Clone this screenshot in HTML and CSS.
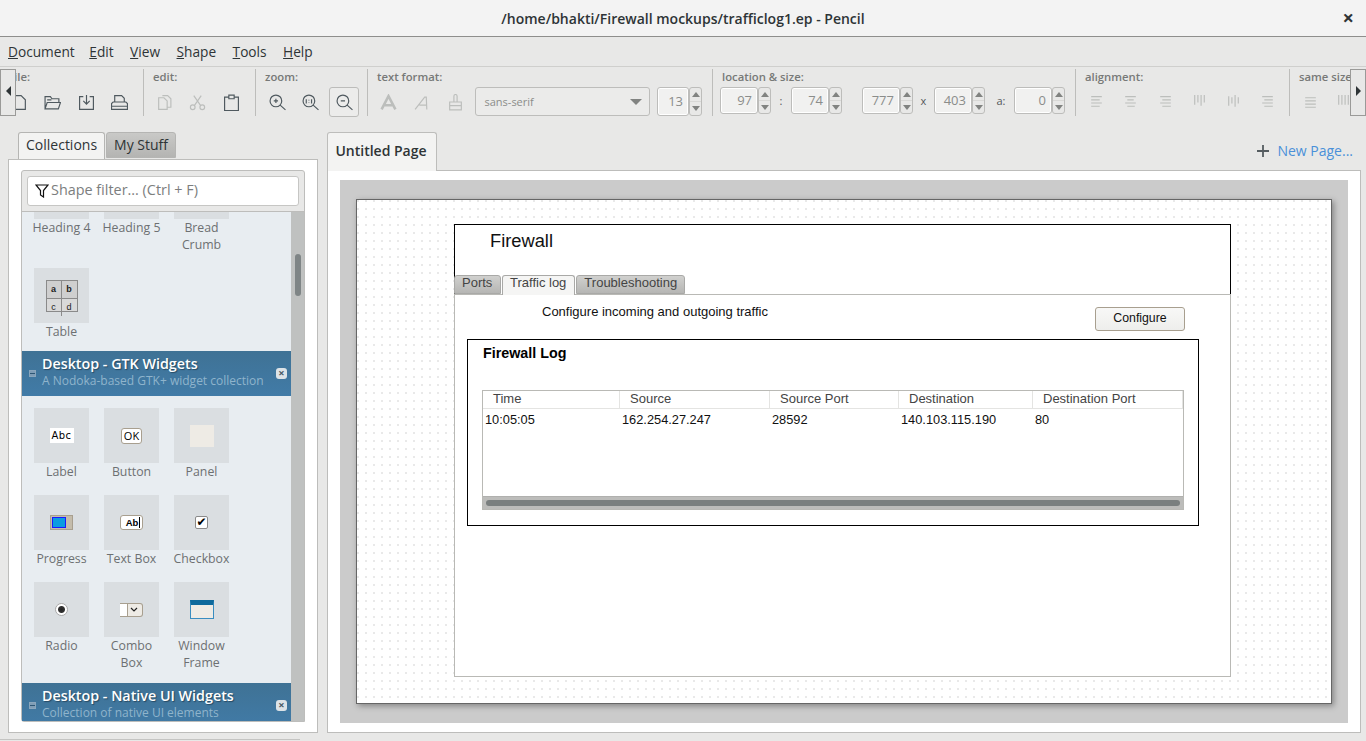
FILE: index.html
```html
<!DOCTYPE html>
<html lang="en">
<head>
    <meta charset="UTF-8">
    <title>trafficlog1.ep - Pencil</title>
    <link rel="stylesheet" href="styles.css">
</head>
<body>
    <svg class="defs" width="0" height="0">
        <symbol id="i-new" viewBox="0 0 16 16"><path d="M2.5 1.5h7l4 4v9h-11z"/></symbol>
        <symbol id="i-open" viewBox="0 0 16 16"><path d="M1 14V2.5h5l1.5 2h6.5v3.5M1 14l2-6h12.5l-2 6zM3 5.5h4"/></symbol>
        <symbol id="i-save" viewBox="0 0 16 16"><path d="M5 2.5H1.500v12h13v-12H11M8 1v8.500M5 6.500L8 9.500l3-3"/></symbol>
        <symbol id="i-print" viewBox="0 0 16 16"><path d="M3.5 7.5V1.5h6.5l2.5 2.5v3.5M.5 14.5V9l1.5-1.5h12L15.5 9v5.5zM.5 11.5h15"/></symbol>
        <symbol id="i-copy" viewBox="0 0 16 16"><path d="M6 1.5h5l3 3v8h-3M2.5 3.5h5l3 3v8h-8z"/></symbol>
        <symbol id="i-cut" viewBox="0 0 16 16"><circle cx="3.5" cy="12.5" r="2.2"/><circle cx="12.5" cy="12.5" r="2.2"/><path d="M5 11L11.5 1.5M11 11L4.5 1.5"/></symbol>
        <symbol id="i-paste" viewBox="0 0 16 16"><path d="M5 3H1.5v12.5h13V3H11M5.5 4.5V1h5v3.5z"/></symbol>
        <symbol id="i-zin" viewBox="0 0 16 16"><circle cx="6.5" cy="6.5" r="5.5"/><path d="M10.5 10.5l5 4.5M4.5 6.5h4M6.5 4.5v4"/></symbol>
        <symbol id="i-zfit" viewBox="0 0 16 16"><circle cx="6.5" cy="6.5" r="5.5"/><path d="M10.5 10.5l5 4.5M4 5v4M6.5 5.5v.5M6.5 8v.5M9 5v4"/></symbol>
        <symbol id="i-zout" viewBox="0 0 16 16"><circle cx="6.5" cy="6.5" r="5.5"/><path d="M10.5 10.5l5 4.5M4.5 6.5h4"/></symbol>
        <symbol id="i-bold" viewBox="0 0 16 16"><path class="fat" d="M1.5 14.5L8 2 14.5 14.5M4.5 10.5h7"/></symbol>
        <symbol id="i-italic" viewBox="0 0 16 16"><path d="M2 14.5L11 3h1.5l.5 11.5M6 10.5h7"/></symbol>
        <symbol id="i-brush" viewBox="0 0 16 16"><path d="M6.5 7V2a1.5 1.5 0 0 1 3 0v5M2.5 7.5h11V15h-11zM2.5 11h11"/></symbol>
        <symbol id="i-left" viewBox="0 0 16 16"><path d="M3 2.5h10M3 5.5h8M3 8.5h10M3 11.5h8"/></symbol>
        <symbol id="i-center" viewBox="0 0 16 16"><path d="M3 2.5h10M5 5.5h6M3 8.5h10M5 11.5h7"/></symbol>
        <symbol id="i-right" viewBox="0 0 16 16"><path d="M3 2.5h10M5 5.5h8M3 8.5h10M5 11.5h8"/></symbol>
        <symbol id="i-vert" viewBox="0 0 16 16"><path d="M3.5 1v9M6.5 1v7M9.5 1v10M12.5 1v7"/></symbol>
        <symbol id="i-vmid" viewBox="0 0 16 16"><path d="M3.5 2v9M6.5 3v6M9.5 1v11M12.5 3v6"/></symbol>
        <symbol id="i-even" viewBox="0 0 16 16"><path d="M3 3.5h10M3 6.5h10M3 9.5h10M3 12.5h10"/></symbol>
        <symbol id="i-bars" viewBox="0 0 16 16"><path d="M3.5 1v9M6.5 1v9M9.5 1v9M12.5 1v9"/></symbol>
    </svg>

    <header class="titlebar">
        <span class="window-title">/home/bhakti/Firewall mockups/trafficlog1.ep - Pencil</span>
        <span class="window-close">&times;</span>
    </header>

    <nav class="menubar">
        <a><u>D</u>ocument</a>
        <a><u>E</u>dit</a>
        <a><u>V</u>iew</a>
        <a><u>S</u>hape</a>
        <a><u>T</u>ools</a>
        <a><u>H</u>elp</a>
    </nav>

    <div class="toolbar">
        <div class="toolbar-strip">
            <section class="tool-group group-file">
                <h4>file:</h4>
                <div class="tool-row">
                    <span class="tool"><svg><use href="#i-new"/></svg></span>
                    <span class="tool"><svg><use href="#i-open"/></svg></span>
                    <span class="tool"><svg><use href="#i-save"/></svg></span>
                    <span class="tool"><svg><use href="#i-print"/></svg></span>
                </div>
            </section>
            <section class="tool-group group-edit">
                <h4>edit:</h4>
                <div class="tool-row">
                    <span class="tool off"><svg><use href="#i-copy"/></svg></span>
                    <span class="tool off"><svg><use href="#i-cut"/></svg></span>
                    <span class="tool"><svg><use href="#i-paste"/></svg></span>
                </div>
            </section>
            <section class="tool-group group-zoom">
                <h4>zoom:</h4>
                <div class="tool-row">
                    <span class="tool"><svg><use href="#i-zin"/></svg></span>
                    <span class="tool"><svg><use href="#i-zfit"/></svg></span>
                    <span class="tool active"><svg><use href="#i-zout"/></svg></span>
                </div>
            </section>
            <section class="tool-group group-text">
                <h4>text format:</h4>
                <div class="tool-row">
                    <span class="tool off"><svg><use href="#i-bold"/></svg></span>
                    <span class="tool off"><svg><use href="#i-italic"/></svg></span>
                    <span class="tool off"><svg><use href="#i-brush"/></svg></span>
                    <span class="combo">sans-serif<i class="combo-arrow"></i></span>
                    <span class="spin spin-font"><b>13</b><i class="spin-btns"><i class="up"></i><i class="down"></i></i></span>
                </div>
            </section>
            <section class="tool-group group-geom">
                <h4>location &amp; size:</h4>
                <div class="tool-row geom-row">
                    <span class="spin"><b>97</b><i class="spin-btns"><i class="up"></i><i class="down"></i></i></span>
                    <span class="geom-sep">:</span>
                    <span class="spin"><b>74</b><i class="spin-btns"><i class="up"></i><i class="down"></i></i></span>
                    <span class="geom-gap"></span>
                    <span class="spin"><b>777</b><i class="spin-btns"><i class="up"></i><i class="down"></i></i></span>
                    <span class="geom-sep geom-x">x</span>
                    <span class="spin"><b>403</b><i class="spin-btns"><i class="up"></i><i class="down"></i></i></span>
                    <span class="geom-sep geom-a">a:</span>
                    <span class="spin"><b>0</b><i class="spin-btns"><i class="up"></i><i class="down"></i></i></span>
                </div>
            </section>
            <section class="tool-group group-align">
                <h4>alignment:</h4>
                <div class="tool-row">
                    <span class="tool off"><svg><use href="#i-left"/></svg></span>
                    <span class="tool off"><svg><use href="#i-center"/></svg></span>
                    <span class="tool off"><svg><use href="#i-right"/></svg></span>
                    <span class="tool off"><svg><use href="#i-vert"/></svg></span>
                    <span class="tool off"><svg><use href="#i-vmid"/></svg></span>
                    <span class="tool off"><svg><use href="#i-right"/></svg></span>
                </div>
            </section>
            <section class="tool-group group-same">
                <h4>same size:</h4>
                <div class="tool-row">
                    <span class="tool off"><svg><use href="#i-even"/></svg></span>
                    <span class="tool off"><svg><use href="#i-bars"/></svg></span>
                </div>
            </section>
        </div>
        <button class="scroll-btn scroll-left"><i></i></button>
        <button class="scroll-btn scroll-right"><i></i></button>
    </div>

    <main class="workspace">
        <aside class="sidebar">
            <div class="side-tabs">
                <span class="side-tab current">Collections</span>
                <span class="side-tab">My Stuff</span>
            </div>
            <div class="side-panel">
                <div class="collections">
                    <div class="filter-bar">
                        <div class="filter-input">
                            <svg class="filter-icon" viewBox="0 0 14 14"><path d="M1 1h12L8.5 6.5V13L5.5 11V6.5z"/></svg>
                            Shape filter... (Ctrl + F)
                        </div>
                    </div>
                    <div class="list-wrap">
                        <div class="shape-list">
                            <div class="shape-grid scrolled">
                                <div class="shape-item"><div class="tile"></div><span>Heading 4</span></div>
                                <div class="shape-item"><div class="tile"></div><span>Heading 5</span></div>
                                <div class="shape-item"><div class="tile"></div><span>Bread<br>Crumb</span></div>
                                <div class="shape-item">
                                    <div class="tile">
                                        <div class="ico-table"><b>a</b><b>b</b><span>c</span><span>d</span></div>
                                    </div>
                                    <span>Table</span>
                                </div>
                            </div>
                            <div class="collection-head">
                                <i class="head-minus"></i>
                                <div>
                                    <h3>Desktop - GTK Widgets</h3>
                                    <p>A Nodoka-based GTK+ widget collection</p>
                                </div>
                                <i class="head-close"></i>
                            </div>
                            <div class="shape-grid">
                                <div class="shape-item"><div class="tile"><span class="ico-label">Abc</span></div><span>Label</span></div>
                                <div class="shape-item"><div class="tile"><span class="ico-button">OK</span></div><span>Button</span></div>
                                <div class="shape-item"><div class="tile"><span class="ico-panel"></span></div><span>Panel</span></div>
                                <div class="shape-item"><div class="tile"><span class="ico-progress"><i></i></span></div><span>Progress</span></div>
                                <div class="shape-item"><div class="tile"><span class="ico-textbox">Ab<i></i></span></div><span>Text Box</span></div>
                                <div class="shape-item"><div class="tile"><span class="ico-check">&#10004;</span></div><span>Checkbox</span></div>
                                <div class="shape-item"><div class="tile"><span class="ico-radio"></span></div><span>Radio</span></div>
                                <div class="shape-item">
                                    <div class="tile">
                                        <span class="ico-combo"><svg viewBox="0 0 8 6"><path d="M1 1l3 3 3-3"/></svg></span>
                                    </div>
                                    <span>Combo<br>Box</span>
                                </div>
                                <div class="shape-item"><div class="tile"><span class="ico-frame"></span></div><span>Window<br>Frame</span></div>
                            </div>
                            <div class="collection-head">
                                <i class="head-minus"></i>
                                <div>
                                    <h3>Desktop - Native UI Widgets</h3>
                                    <p>Collection of native UI elements</p>
                                </div>
                                <i class="head-close"></i>
                            </div>
                        </div>
                        <div class="list-scroll"><i></i></div>
                    </div>
                </div>
            </div>
        </aside>

        <div class="pages">
            <div class="page-tabs">
                <span class="page-tab">Untitled Page</span>
                <span class="new-page">
                    <svg viewBox="0 0 12 12"><path d="M6 0v12M0 6h12"/></svg>
                    New Page...
                </span>
            </div>
            <div class="page-panel">
                <div class="canvas">
                    <div class="drawing">
                        <div class="mock mock-head"></div>
                        <div class="mock mock-body"></div>
                        <div class="mock mock-title">Firewall</div>
                        <div class="mock mock-tabs">
                            <span class="mock-tab">Ports</span>
                            <span class="mock-tab on">Traffic log</span>
                            <span class="mock-tab">Troubleshooting</span>
                        </div>
                        <div class="mock mock-note">Configure incoming and outgoing traffic</div>
                        <div class="mock mock-button">Configure</div>
                        <div class="mock mock-log">
                            <div class="log-title">Firewall Log</div>
                            <div class="log-table">
                                <div class="log-row log-header">
                                    <span>Time</span><span>Source</span><span>Source Port</span><span>Destination</span><span>Destination Port</span>
                                </div>
                                <div class="log-row log-data">
                                    <span>10:05:05</span><span>162.254.27.247</span><span>28592</span><span>140.103.115.190</span><span>80</span>
                                </div>
                                <div class="log-scroll"><i></i></div>
                            </div>
                        </div>
                    </div>
                </div>
            </div>
        </div>
    </main>

    <div class="status-line"></div>
</body>
</html>
```
FILE: styles.css
```css
/* Reset */
* {
    margin: 0;
    padding: 0;
    box-sizing: border-box;
}

body {
    width: 1366px;
    height: 741px;
    overflow: hidden;
    font-family: 'Open Sans', sans-serif;
    background-color: #e8e8e7;
    color: #2e3436;
    display: flex;
    flex-direction: column;
    position: relative;
}

i {
    font-style: normal;
}

.defs {
    position: absolute;
}

/* Title bar */
.titlebar {
    height: 37px;
    flex: none;
    background-color: #f3f3f3;
    border-bottom: 1px solid #8e8e8c;
    display: flex;
    align-items: center;
    justify-content: center;
    position: relative;
}

.window-title {
    font-size: 14px;
    font-weight: 600;
    color: #2e3436;
}

.window-close {
    position: absolute;
    right: 12px;
    top: 6px;
    font-size: 20px;
    font-weight: 700;
    line-height: 24px;
}

/* Menu */
.menubar {
    height: 30px;
    flex: none;
    display: flex;
    gap: 16.5px;
    align-items: center;
    padding-left: 8px;
    border-bottom: 1px solid #cfcfcd;
    font-size: 13.7px;
}

.menubar a:first-child {
    margin-right: -2px;
}

/* Toolbar */
.toolbar {
    height: 65px;
    flex: none;
    position: relative;
    overflow: hidden;
}

.toolbar-strip {
    display: flex;
    margin-left: -9px;
    padding-top: 2px;
}

.tool-group {
    height: 47px;
    flex: none;
    border-right: 1px solid #bdbdbb;
    padding-left: 9px;
}

.group-file { width: 153px; padding-left: 19px; }
.group-edit { width: 112px; }
.group-zoom { width: 112px; }
.group-text { width: 345px; }
.group-geom { width: 363px; }
.group-align { width: 214px; }
.group-same { width: 120px; border-right: 0; }

.tool-group h4 {
    font-size: 11.3px;
    font-weight: 600;
    line-height: 16px;
    color: #777977;
    height: 18px;
}

.tool-row {
    display: flex;
    align-items: flex-start;
    gap: 3.6px;
    margin-left: -3px;
}

.group-file .tool-row { margin-left: -6px; }
.group-edit .tool-row { margin-left: -4px; }

.tool {
    width: 30px;
    height: 30px;
    display: flex;
    align-items: center;
    justify-content: center;
    border: 1px solid transparent;
    border-radius: 3px;
}

.tool svg {
    width: 17px;
    height: 17px;
    fill: none;
    stroke: #4f595f;
    stroke-width: 1.1;
}

.tool.off svg {
    stroke: #bcbebc;
}

.fat {
    stroke-width: 2.4;
}

.tool.active {
    border-color: #bcbcba;
    background-color: #ececeb;
}

.group-text .tool-row {
    margin-left: -4px;
    gap: 3.5px;
}

.group-align .tool-row {
    gap: 4.3px;
    margin-left: -3.5px;
}

.group-same .tool-row {
    margin-left: -4px;
}

.combo {
    width: 175px;
    height: 29px;
    margin-left: 1px;
    border: 1px solid #bdbdbb;
    border-radius: 3px;
    background-color: #ebebea;
    display: flex;
    align-items: center;
    justify-content: space-between;
    padding: 0 7px 0 9px;
    font-size: 11px;
    color: #8b8d8b;
}

.combo-arrow {
    border-left: 6px solid transparent;
    border-right: 6px solid transparent;
    border-top: 6px solid #818381;
}

.spin {
    display: flex;
    height: 27px;
}

.spin b {
    width: 38px;
    border: 1px solid #bdbdbb;
    border-radius: 3px;
    background-color: #f1f1f0;
    box-shadow: inset 0 0 0 1px #fff;
    font-size: 13px;
    font-weight: 400;
    color: #8b8d8b;
    text-align: right;
    padding-right: 5px;
    line-height: 25px;
}

.spin-font {
    margin-left: 4px;
    height: 29px;
}

.spin-font b {
    width: 32px;
    line-height: 27px;
}

.spin-btns {
    width: 13px;
    border: 1px solid #bdbdbb;
    border-radius: 3px;
    display: flex;
    flex-direction: column;
}

.spin-btns i {
    flex: 1;
    display: flex;
    align-items: center;
    justify-content: center;
}

.spin-btns i::before {
    content: "";
    border-left: 4px solid transparent;
    border-right: 4px solid transparent;
}

.spin-btns .up {
    border-bottom: 1px solid #d8d8d6;
}

.spin-btns .up::before {
    border-bottom: 5px solid #818381;
}

.spin-btns .down::before {
    border-top: 5px solid #818381;
}

.geom-row {
    gap: 0;
    margin-left: -2px;
}

.geom-sep {
    width: 20px;
    text-align: center;
    font-size: 11px;
    line-height: 27px;
    color: #55585a;
}

.geom-gap {
    width: 20px;
}

.geom-x {
    width: 21px;
}

.geom-a {
    width: 29px;
    padding-left: 3px;
}

.scroll-btn {
    position: absolute;
    top: 2px;
    width: 16px;
    height: 47px;
    background-color: #e8e8e7;
    border: 1px solid #9a9a98;
    display: flex;
    align-items: center;
    justify-content: center;
    padding-bottom: 4px;
}

.scroll-left {
    left: 0;
}

.scroll-right {
    right: 0;
}

.scroll-left i {
    border-top: 5px solid transparent;
    border-bottom: 5px solid transparent;
    border-right: 5px solid #2e3436;
}

.scroll-right i {
    border-top: 5px solid transparent;
    border-bottom: 5px solid transparent;
    border-left: 5px solid #2e3436;
}

/* Main area */
.workspace {
    flex: 1;
    display: flex;
    padding: 0 5px 8px 8px;
    min-height: 0;
}

/* Left panel */
.sidebar {
    width: 310px;
    margin-right: 9px;
    display: flex;
    flex-direction: column;
}

.side-tabs {
    display: flex;
    gap: 1px;
    padding-left: 10px;
    height: 27px;
    flex: none;
    position: relative;
    z-index: 1;
}

.side-tab {
    height: 26px;
    padding: 0 7px;
    border: 1px solid #b5b5b3;
    border-radius: 3px 3px 0 0;
    background: linear-gradient(#c9c9c7, #b4b4b2);
    font-size: 14px;
    line-height: 23px;
}

.side-tab.current {
    height: 27px;
    background: #f3f3f2;
    border-bottom: 0;
}

.side-panel {
    flex: 1;
    background-color: #fff;
    border: 1px solid #bdbdbb;
    padding: 10px 12px;
    min-height: 0;
}

.collections {
    height: 100%;
    border: 1px solid #bdbdbb;
    border-radius: 3px 3px 0 3px;
    background-color: #e8e8e7;
    display: flex;
    flex-direction: column;
}

.filter-bar {
    height: 41px;
    flex: none;
    padding: 5px 5px 0;
    border-bottom: 1px solid #bdbdbb;
}

.filter-input {
    height: 30px;
    background-color: #fff;
    border: 1px solid #c6c6c4;
    border-radius: 3px;
    font-size: 14.4px;
    line-height: 26px;
    padding-bottom: 2px;
    color: #7c7e7e;
    display: flex;
    align-items: center;
    padding-left: 7px;
    gap: 2px;
}

.filter-icon {
    width: 14px;
    height: 14px;
    margin-top: 2px;
    fill: none;
    stroke: #111;
    stroke-width: 1.2;
    flex: none;
}

.list-wrap {
    flex: 1;
    display: flex;
    min-height: 0;
}

.shape-list {
    width: 269px;
    flex: none;
    background-color: #e8edf1;
    overflow: hidden;
}

.list-scroll {
    flex: 1;
    background-color: #bfc1c0;
    padding-left: 4px;
}

.list-scroll i {
    display: block;
    width: 6px;
    height: 42px;
    margin-top: 42px;
    border-radius: 3px;
    background-color: #7f8586;
}

.shape-grid {
    display: grid;
    grid-template-columns: repeat(3, 55px);
    column-gap: 15px;
    row-gap: 15px;
    padding: 12px 12px 12px;
}

.shape-grid.scrolled {
    margin-top: -60px;
    padding-bottom: 11px;
}

.shape-item {
    font-size: 12.3px;
    line-height: 17px;
    color: #6d7072;
    text-align: center;
}

.shape-item > span {
    display: block;
    margin: 0 -6px;
    white-space: nowrap;
}

.tile {
    width: 55px;
    height: 55px;
    background-color: #dadee1;
    display: flex;
    align-items: center;
    justify-content: center;
}

.collection-head {
    height: 45px;
    background: linear-gradient(#3f7295, #417ba7);
    color: #fff;
    display: flex;
    align-items: flex-start;
    padding: 3px 4px 0 7px;
}

.collection-head div {
    flex: 1;
    margin-left: 6px;
}

.collection-head h3 {
    font-size: 14.3px;
    font-weight: 600;
    line-height: 19px;
    text-shadow: 1px 1px 1px #274a63;
}

.collection-head p {
    font-size: 12px;
    line-height: 15px;
    color: #8fb4cc;
    white-space: nowrap;
}

.head-minus {
    width: 7px;
    height: 7px;
    margin-top: 15.5px;
    background-color: #7f9db6;
    border: 1px solid #8aa6bc;
    position: relative;
    flex: none;
}

.head-minus::after {
    content: "";
    position: absolute;
    left: 0;
    right: 0;
    top: 2px;
    height: 1px;
    background-color: #2d5674;
}

.head-close {
    width: 11px;
    height: 11px;
    margin-top: 13.5px;
    border-radius: 3px;
    background-color: #dde3e7;
    flex: none;
    color: #4a5a66;
    font-size: 11px;
    line-height: 10px;
    text-align: center;
    font-weight: 700;
}

.head-close::after {
    content: "\00d7";
}

/* Little shape previews */
.ico-table {
    width: 32px;
    height: 32px;
    border: 1px solid #8a8a8a;
    display: grid;
    grid-template-columns: 1fr 1fr;
    grid-template-rows: 1fr 1fr;
    font-family: 'Liberation Sans', sans-serif;
    font-size: 9px;
    color: #222;
    background-color: #d9d9d9;
}

.ico-table b,
.ico-table span {
    display: flex;
    align-items: center;
    justify-content: center;
}

.ico-table b {
    background-color: #cfcfcf;
    border-bottom: 1px solid #8a8a8a;
}

.ico-table b:first-child,
.ico-table span:nth-child(3) {
    border-right: 1px solid #8a8a8a;
}

.ico-label {
    width: 24px;
    height: 15px;
    background-color: #fff;
    color: #000;
    font-family: 'DejaVu Sans', sans-serif;
    font-size: 10px;
    line-height: 15px;
    text-align: center;
    letter-spacing: .5px;
}

.ico-button {
    width: 21px;
    height: 16px;
    border: 1px solid #a89f8f;
    border-radius: 3px;
    background-color: #fff;
    color: #000;
    font-size: 11px;
    line-height: 14px;
    text-align: center;
}

.ico-panel {
    width: 24px;
    height: 22px;
    background-color: #eeebe5;
}

.ico-progress {
    width: 23px;
    height: 15px;
    background-color: #c4bcab;
    border: 1px solid #a89f8f;
    padding: 1px;
}

.ico-progress i {
    display: block;
    width: 14px;
    height: 11px;
    background-color: #0a9ce0;
    border: 1px solid #1a1aff;
}

.ico-textbox {
    width: 23px;
    height: 15px;
    border: 1px solid #a89f8f;
    border-radius: 3px;
    background-color: #fff;
    color: #000;
    font-size: 9.5px;
    font-weight: 700;
    line-height: 13px;
    padding-left: 3px;
    font-family: 'Liberation Sans', sans-serif;
}

.ico-textbox i {
    display: inline-block;
    width: 1px;
    height: 11px;
    background-color: #000;
    margin-left: 1px;
    vertical-align: -2px;
}

.ico-check {
    width: 13px;
    height: 13px;
    border: 1px solid #8a8a8a;
    border-radius: 2px;
    background-color: #fff;
    color: #000;
    font-size: 12px;
    line-height: 11px;
    text-align: center;
    font-family: 'DejaVu Sans', sans-serif;
}

.ico-radio {
    width: 13px;
    height: 13px;
    border-radius: 50%;
    border: 1px solid #aaa;
    background: radial-gradient(circle, #222 0, #333 3px, #fff 4px);
}

.ico-combo {
    width: 23px;
    height: 14px;
    border-right: 1px solid #a89f8f;
    border-top: 1px solid #a89f8f;
    border-bottom: 1px solid #a89f8f;
    border-radius: 0 3px 3px 0;
    background: linear-gradient(90deg, #fff 0, #fff 7px, #a89f8f 7px, #a89f8f 8px, #eeebe5 8px);
    display: flex;
    align-items: center;
    justify-content: flex-end;
    padding-right: 4px;
}

.ico-combo svg {
    width: 8px;
    height: 6px;
    fill: none;
    stroke: #222;
    stroke-width: 1.2;
}

.ico-frame {
    width: 24px;
    height: 19px;
    border: 1px solid #3a8dc0;
    border-top: 5px solid #0f6a9c;
    background-color: #eeebe5;
}

/* Pages */
.pages {
    flex: 1;
    display: flex;
    flex-direction: column;
    min-width: 0;
}

.page-tabs {
    height: 38px;
    flex: none;
    display: flex;
    justify-content: space-between;
    position: relative;
    z-index: 1;
}

.page-tab {
    height: 39px;
    width: 110px;
    border: 1px solid #bdbdbb;
    border-bottom: 0;
    border-radius: 3px 3px 0 0;
    background-color: #f3f3f2;
    font-size: 14px;
    font-weight: 600;
    line-height: 35px;
    padding-right: 2px;
    text-align: center;
}

.new-page {
    font-size: 14px;
    color: #4a90d9;
    line-height: 38px;
    padding-right: 8px;
    display: flex;
    align-items: center;
    gap: 8px;
}

.new-page svg {
    width: 12px;
    height: 12px;
    fill: none;
    stroke: #555c60;
    stroke-width: 1.8;
}

.page-panel {
    flex: 1;
    background-color: #fff;
    border: 1px solid #bdbdbb;
    padding: 9px 12px;
    min-height: 0;
}

.canvas {
    height: 100%;
    background-color: #cbcbcb;
    padding: 19px 16px;
}

.drawing {
    width: 976px;
    height: 505px;
    position: relative;
    border: 1px solid #666;
    background-color: #fff;
    background-image: radial-gradient(circle at 1px 1px, #e9e9e9 1px, transparent 1px);
    background-size: 8px 8px;
    box-shadow: 2px 2px 6px rgba(0, 0, 0, 0.35);
    font-family: 'Liberation Sans', sans-serif;
    color: #000;
}

/* Shapes sit on the drawing at their own coordinates */
.mock {
    position: absolute;
}

.mock-head {
    left: 97px;
    top: 24px;
    width: 777px;
    height: 71px;
    background-color: #fff;
    border: 1px solid #000;
    border-bottom: 0;
}

.mock-body {
    left: 97px;
    top: 94px;
    width: 777px;
    height: 383px;
    background-color: #fff;
    border: 1px solid #b9b9b5;
}

.mock-title {
    left: 133px;
    top: 29px;
    font-size: 18.3px;
    line-height: 24px;
    color: #111;
}

.mock-tabs {
    left: 97px;
    top: 75px;
    display: flex;
    gap: 1px;
}

.mock-tab {
    height: 19px;
    padding: 0 7px;
    border: 1px solid #a9a9a7;
    border-radius: 3px 3px 0 0;
    background: linear-gradient(#d0d0ce, #b6b6b4);
    font-size: 13px;
    line-height: 14px;
    color: #444;
}

.mock-tab:first-child {
    min-width: 47px;
}

.mock-tab.on {
    height: 20px;
    padding-right: 8px;
    background: #f5f5f4;
    border-bottom: 0;
}

.mock-note {
    left: 185px;
    top: 104px;
    font-size: 13px;
    line-height: 15px;
    color: #111;
}

.mock-button {
    left: 738px;
    top: 107px;
    width: 90px;
    height: 24px;
    border: 1px solid #a89f8f;
    border-radius: 3px;
    background: linear-gradient(#f8f8f7, #eeeeec);
    font-size: 12.3px;
    line-height: 21px;
    text-align: center;
    color: #111;
}

.mock-log {
    left: 110px;
    top: 139px;
    width: 732px;
    height: 187px;
    background-color: #fff;
    border: 1px solid #000;
    padding: 5px 14px 0;
}

.log-title {
    font-size: 14.3px;
    font-weight: 700;
    line-height: 16px;
    padding-left: 1px;
    margin-bottom: 29px;
}

.log-table {
    width: 702px;
    height: 120px;
    border: 1px solid #b9b9b5;
    display: flex;
    flex-direction: column;
    font-size: 13px;
}

.log-row {
    display: grid;
    grid-template-columns: 137px 150px 129px 134px 1fr;
}

.log-header {
    height: 18px;
    line-height: 16px;
    color: #444;
    border-bottom: 1px solid #e4e4e2;
}

.log-header span {
    padding-left: 10px;
    border-right: 1px solid #e4e4e2;
}

.log-data {
    flex: 1;
    font-size: 12.8px;
    line-height: 21px;
    color: #111;
}

.log-data span {
    padding-left: 2px;
}

.log-scroll {
    height: 13px;
    background-color: #bcbcba;
    border-top: 1px solid #b0b0ae;
    padding: 3px 3px 0;
}

.log-scroll i {
    display: block;
    height: 6px;
    border-radius: 3px;
    background-color: #7a7f7f;
}

/* Bottom edge of the window */
.status-line {
    position: absolute;
    left: 0;
    bottom: 1px;
    width: 300px;
    height: 1px;
    background-color: #c4c4c2;
}
```
